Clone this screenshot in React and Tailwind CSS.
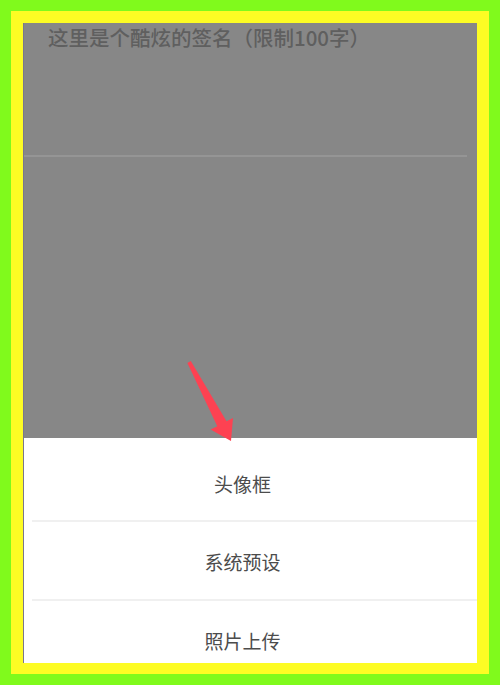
const cjk = { fontFamily: '"Noto Sans CJK SC", "Noto Sans", sans-serif' }

const options = ['头像框', '系统预设', '照片上传']

function Arrow() {
  // red annotation arrow pointing at the sheet
  return (
    <svg className="pointer-events-none absolute left-0 top-0" width="500" height="685" viewBox="0 0 500 685">
      <polygon
        points="190.8,361 226.5,421.3 233,418 231,441 210.6,429.6 217.3,426.2 187.4,363"
        fill="#fd4252"
      />
    </svg>
  )
}

export default function App() {
  return (
    <div className="relative h-[685px] w-[500px] overflow-hidden bg-[#80fa1c] p-[11px]" style={cjk}>
      <div className="h-full w-full bg-[#fdfc24] p-[12px] pb-[11px]">
        <div className="flex h-full flex-col overflow-hidden border-l border-[#7a778c]">
          <div className="flex h-[415px] shrink-0 flex-col bg-[#878787]">
            <p className="pl-[24px] text-[20.5px] leading-[28px] font-medium text-[#5f5f5f]">
              这里是个酷炫的签名（限制100字）
            </p>
            <div className="mt-[104px] mr-[10px] h-[2px] bg-[#959595]" />
          </div>
          <div className="flex-1 bg-white">
            {options.map((label, i) => (
              <div key={label}>
                {i > 0 && <div className="ml-[8px] h-[2px] bg-[#f0f0f0]" />}
                <div
                  className={
                    'flex items-center justify-center pr-[16px] text-[19px] text-[#4c4c4c] ' +
                    (i === 0 ? 'h-[82px] pt-[10px]' : 'h-[77px] pt-[4px]')
                  }
                >
                  {label}
                </div>
              </div>
            ))}
          </div>
        </div>
      </div>
      <Arrow />
    </div>
  )
}
